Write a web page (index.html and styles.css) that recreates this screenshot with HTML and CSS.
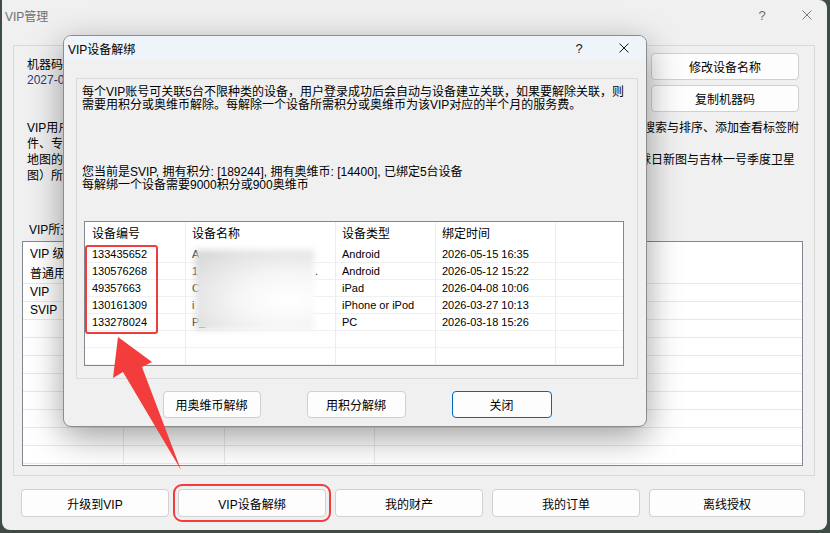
FILE: index.html
```html
<!DOCTYPE html>
<html lang="zh-CN">
<head>
    <meta charset="UTF-8">
    <meta name="viewport" content="width=device-width, initial-scale=1.0">
    <title>VIP管理</title>
    <link rel="stylesheet" href="styles.css">
</head>
<body>
    <div class="window">
        <div class="win-title">
            <span class="title-text">VIP管理</span>
            <div class="win-ctrl">
                <span class="ctrl-help">?</span>
                <span class="ctrl-close">
                    <svg width="10" height="10" viewBox="0 0 10 10"><path d="M0.5 0.5L9.5 9.5M9.5 0.5L0.5 9.5" stroke="#7a7a7a" stroke-width="1"/></svg>
                </span>
            </div>
        </div>

        <div class="group">
            <div class="top-row">
                <div class="machine">
                    <div>机器码：5F3A9C21D07E</div>
                    <div class="expire">2027-06-30 到期</div>
                </div>
                <div class="side-buttons">
                    <button class="btn">修改设备名称</button>
                    <button class="btn">复制机器码</button>
                </div>
            </div>

            <div class="intro">
                <p class="intro-line"><span>VIP用户可享受更多高级功能，包括收藏夹云端同步</span><span>标签搜索与排序、添加查看标签附</span></p>
                <p class="intro-line"><span>件、专题图层管理等功能</span></p>
                <p class="intro-line line-short"><span>地图的离线下载与高清影像</span><span>全球日新图与吉林一号季度卫星</span></p>
                <p class="intro-line"><span>图）所需的服务</span></p>
            </div>

            <div class="list-label">VIP所支持的功能对比</div>
            <div class="vip-list">
                <div class="vip-row vip-head">
                    <div class="vip-cell">VIP 级别</div>
                    <div class="vip-cell"></div>
                    <div class="vip-cell"></div>
                    <div class="vip-cell"></div>
                </div>
                <div class="vip-row"><div class="vip-cell">普通用户</div><div class="vip-cell"></div><div class="vip-cell"></div><div class="vip-cell"></div></div>
                <div class="vip-row"><div class="vip-cell">VIP</div><div class="vip-cell"></div><div class="vip-cell"></div><div class="vip-cell"></div></div>
                <div class="vip-row"><div class="vip-cell">SVIP</div><div class="vip-cell"></div><div class="vip-cell"></div><div class="vip-cell"></div></div>
                <div class="vip-row"><div class="vip-cell"></div><div class="vip-cell"></div><div class="vip-cell"></div><div class="vip-cell"></div></div>
                <div class="vip-row"><div class="vip-cell"></div><div class="vip-cell"></div><div class="vip-cell"></div><div class="vip-cell"></div></div>
                <div class="vip-row"><div class="vip-cell"></div><div class="vip-cell"></div><div class="vip-cell"></div><div class="vip-cell"></div></div>
                <div class="vip-row"><div class="vip-cell"></div><div class="vip-cell"></div><div class="vip-cell"></div><div class="vip-cell"></div></div>
                <div class="vip-row"><div class="vip-cell"></div><div class="vip-cell"></div><div class="vip-cell"></div><div class="vip-cell"></div></div>
                <div class="vip-row"><div class="vip-cell"></div><div class="vip-cell"></div><div class="vip-cell"></div><div class="vip-cell"></div></div>
                <div class="vip-row"><div class="vip-cell"></div><div class="vip-cell"></div><div class="vip-cell"></div><div class="vip-cell"></div></div>
                <div class="vip-row"><div class="vip-cell"></div><div class="vip-cell"></div><div class="vip-cell"></div><div class="vip-cell"></div></div>
                <div class="vip-row"><div class="vip-cell"></div><div class="vip-cell"></div><div class="vip-cell"></div><div class="vip-cell"></div></div>
            </div>
        </div>

        <div class="bottom-buttons">
            <button class="btn">升级到VIP</button>
            <button class="btn btn-marked">VIP设备解绑</button>
            <button class="btn">我的财产</button>
            <button class="btn">我的订单</button>
            <button class="btn">离线授权</button>
        </div>
    </div>

    <div class="dialog">
        <div class="dlg-title">
            <span>VIP设备解绑</span>
            <div class="win-ctrl dlg-ctrl">
                <span class="ctrl-help">?</span>
                <span class="ctrl-close">
                    <svg width="10" height="10" viewBox="0 0 10 10"><path d="M0.5 0.5L9.5 9.5M9.5 0.5L0.5 9.5" stroke="#1a1a1a" stroke-width="1"/></svg>
                </span>
            </div>
        </div>

        <div class="dlg-body">
            <div class="panel">
                <p class="note">每个VIP账号可关联5台不限种类的设备，用户登录成功后会自动与设备建立关联，如果要解除关联，则<br>需要用积分或奥维币解除。每解除一个设备所需积分或奥维币为该VIP对应的半个月的服务费。</p>
                <p class="note account">您当前是SVIP, 拥有积分: [189244], 拥有奥维币: [14400], 已绑定5台设备<br>每解绑一个设备需要9000积分或900奥维币</p>

                <div class="dev-table">
                    <div class="dev-row dev-head">
                        <div class="dev-cell">设备编号</div>
                        <div class="dev-cell">设备名称</div>
                        <div class="dev-cell">设备类型</div>
                        <div class="dev-cell">绑定时间</div>
                        <div class="dev-cell"></div>
                    </div>
                    <div class="dev-row">
                        <div class="dev-cell">133435652</div>
                        <div class="dev-cell">A</div>
                        <div class="dev-cell">Android</div>
                        <div class="dev-cell">2026-05-15 16:35</div>
                        <div class="dev-cell"></div>
                    </div>
                    <div class="dev-row">
                        <div class="dev-cell">130576268</div>
                        <div class="dev-cell name-split"><span>1</span><span>.</span></div>
                        <div class="dev-cell">Android</div>
                        <div class="dev-cell">2026-05-12 15:22</div>
                        <div class="dev-cell"></div>
                    </div>
                    <div class="dev-row">
                        <div class="dev-cell">49357663</div>
                        <div class="dev-cell">C</div>
                        <div class="dev-cell">iPad</div>
                        <div class="dev-cell">2026-04-08 10:06</div>
                        <div class="dev-cell"></div>
                    </div>
                    <div class="dev-row">
                        <div class="dev-cell">130161309</div>
                        <div class="dev-cell">i</div>
                        <div class="dev-cell">iPhone or iPod</div>
                        <div class="dev-cell">2026-03-27 10:13</div>
                        <div class="dev-cell"></div>
                    </div>
                    <div class="dev-row">
                        <div class="dev-cell">133278024</div>
                        <div class="dev-cell">P_</div>
                        <div class="dev-cell">PC</div>
                        <div class="dev-cell">2026-03-18 15:26</div>
                        <div class="dev-cell"></div>
                    </div>
                    <div class="dev-row"><div class="dev-cell"></div><div class="dev-cell"></div><div class="dev-cell"></div><div class="dev-cell"></div><div class="dev-cell"></div></div>
                    <div class="dev-row"><div class="dev-cell"></div><div class="dev-cell"></div><div class="dev-cell"></div><div class="dev-cell"></div><div class="dev-cell"></div></div>

                    <div class="name-blur"></div>
                    <div class="pick-box"></div>
                </div>
            </div>

            <div class="dlg-buttons">
                <button class="btn btn-coin">用奥维币解绑</button>
                <button class="btn btn-point">用积分解绑</button>
                <button class="btn btn-close">关闭</button>
            </div>
        </div>
    </div>

    <svg class="arrow" width="830" height="533" viewBox="0 0 830 533">
        <polygon points="118,337 152,362 142,367 181,470 123,372 113,378" fill="#f33c3c"/>
    </svg>
</body>
</html>
```

FILE: styles.css
```css
* {
    box-sizing: border-box;
}
body {
    margin: 0;
    width: 830px;
    height: 533px;
    overflow: hidden;
    position: relative;
    background: #3f4b45;
    font-family: "Liberation Sans", "Noto Sans CJK SC", sans-serif;
    font-size: 12px;
    color: #000;
}

/* main window */
.window {
    margin-left: 2px;
    width: 825px;
    height: 530px;
    background: #f0f0f0;
    border-radius: 0 8px 8px 8px;
    display: flex;
    flex-direction: column;
}
.win-title {
    height: 30px;
    display: flex;
    align-items: center;
    padding-left: 3px;
    color: #6f6f6f;
}
.win-ctrl {
    margin-left: auto;
    display: flex;
    align-items: center;
    gap: 29px;
    padding-right: 12px;
}
.ctrl-help, .ctrl-close {
    width: 16px;
    display: flex;
    justify-content: center;
    align-items: center;
}
.ctrl-help {
    font-size: 13px;
}

.group {
    margin: 15px 12px 0 11px;
    height: 431px;
    border: 1px solid #d9d9d9;
    padding: 7px 15px 9px 13px;
    display: flex;
    flex-direction: column;
}
.top-row {
    display: flex;
    justify-content: space-between;
    align-items: flex-start;
}
.machine {
    margin-top: 5px;
    line-height: 15px;
}
.expire {
    color: #1f3b84;
}
.side-buttons {
    display: flex;
    flex-direction: column;
    gap: 5px;
}
.btn {
    font: inherit;
    color: #000;
    background: #fdfdfd;
    border: 1px solid #d0d0d0;
    border-radius: 4px;
    padding: 0;
}
.side-buttons .btn {
    width: 148px;
    height: 27px;
}
.intro {
    margin-top: 8px;
}
.intro-line {
    margin: 0;
    line-height: 16px;
    display: flex;
    justify-content: space-between;
    white-space: nowrap;
}
.line-short {
    padding-right: 4px;
}
.list-label {
    margin-top: 38px;
    padding-left: 2px;
    line-height: 16px;
}
.vip-list {
    margin: 3px 0 0 -5px;
    width: 781px;
    flex: 1;
    border: 1px solid #828790;
    background: #fff;
    overflow: hidden;
}
.vip-row {
    display: grid;
    grid-template-columns: 101px 101px 150px 1fr;
    height: 18px;
    border-bottom: 1px solid #e8e8e8;
}
.vip-row.vip-head {
    height: 24px;
    border-bottom: none;
}
.vip-cell {
    border-right: 1px solid #e8e8e8;
    padding-left: 7px;
    line-height: 17px;
    white-space: nowrap;
    overflow: hidden;
}
.vip-head .vip-cell {
    line-height: 24px;
}
.vip-cell:last-child {
    border-right: none;
}

.bottom-buttons {
    display: grid;
    grid-template-columns: repeat(4, 148px) 156px;
    gap: 9px;
    margin: 13px 0 0 19px;
}
.bottom-buttons .btn {
    height: 28px;
}
.btn-marked {
    outline: 2px solid #f03c3c;
    outline-offset: 3px;
}

/* unbind dialog */
.dialog {
    position: absolute;
    left: 63px;
    top: 35px;
    width: 584px;
    height: 392px;
    background: #f0f0f0;
    border: 1px solid #8c8c8c;
    border-radius: 8px;
    overflow: hidden;
    box-shadow: 0 10px 34px rgba(0,0,0,0.38);
}
.dlg-title {
    height: 24px;
    background: #eef4f9;
    display: flex;
    align-items: center;
    padding-left: 4px;
}
.dlg-ctrl {
    padding-right: 14px;
    color: #1a1a1a;
}
.dlg-body {
    padding: 18px 8px 0 12px;
}
.panel {
    height: 301px;
    border: 1px solid #dadada;
    padding: 7px 14px 0 5px;
}
.note {
    margin: 0;
    line-height: 13px;
    white-space: nowrap;
}
.account {
    margin-top: 54px;
}
.dev-table {
    position: relative;
    margin: 29px 0 0 2px;
    width: 540px;
    height: 145px;
    border: 1px solid #828790;
    background: #fff;
    overflow: hidden;
}
.dev-row {
    display: grid;
    grid-template-columns: 101px 150px 100px 120px 1fr;
    height: 17px;
    border-bottom: 1px solid #f0f0f0;
    font-size: 11px;
}
.dev-row.dev-head {
    height: 24px;
    border-bottom: none;
    font-size: 12px;
}
.dev-cell {
    border-right: 1px solid #ececec;
    padding-left: 6px;
    line-height: 16px;
    white-space: nowrap;
    overflow: hidden;
}
.dev-cell:first-child {
    padding-left: 7px;
}
.dev-cell:nth-child(2) {
    padding-right: 17px;
}
.dev-cell:last-child {
    border-right: none;
}
.dev-head .dev-cell {
    line-height: 24px;
}
.name-split {
    display: flex;
    justify-content: space-between;
}
.name-blur {
    position: absolute;
    left: 110px;
    top: 28px;
    width: 119px;
    height: 80px;
    background: radial-gradient(ellipse at 78% 62%, #ffffff 0%, #f7f7f7 35%, #e2e2e2 75%, #d2d2d2 100%);
    filter: blur(3px);
}
.pick-box {
    position: absolute;
    left: 0;
    top: 23px;
    width: 73px;
    height: 89px;
    border: 2px solid #f03c3c;
    border-radius: 3px;
}
.dlg-buttons {
    display: flex;
    justify-content: center;
    gap: 46px;
    margin-top: 12px;
}
.dlg-buttons .btn {
    height: 27px;
}
.btn-coin {
    width: 98px;
}
.btn-point {
    width: 99px;
}
.btn-close {
    width: 100px;
    border-color: #0067c0;
}

.arrow {
    position: absolute;
    left: 0;
    top: 0;
    pointer-events: none;
}
```
